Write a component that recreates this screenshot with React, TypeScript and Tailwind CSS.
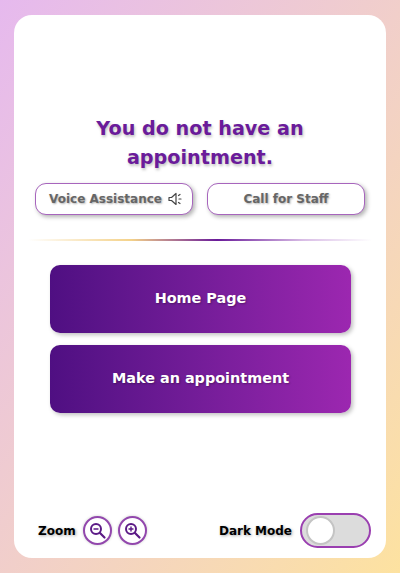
function ZoomButton({ sign }: { sign: "minus" | "plus" }) {
  return (
    <button className="flex h-[29px] w-[29px] items-center justify-center rounded-full border-2 border-[#9247ad] bg-white shadow-[0_0_3px_rgba(0,0,0,0.2)]">
      <svg width="19" height="19" viewBox="0 0 19 19" fill="none" stroke="#5b1a86" strokeWidth="2" strokeLinecap="round">
        <circle cx="8" cy="8" r="5" />
        <path d="M12 12 16.5 16.5" strokeWidth="2.2" />
        <path d="M6 8h4" strokeWidth="1.4" />
        {sign === "plus" && <path d="M8 6v4" strokeWidth="1.4" />}
      </svg>
    </button>
  );
}

function SpeakerIcon() {
  return (
    <svg width="15" height="16" viewBox="0 0 15 16" fill="none" stroke="#444" strokeWidth="1.2" strokeLinecap="round" strokeLinejoin="round">
      <path d="M1 6.5h2.5L8 2.5v11L3.5 9.5H1z" />
      <path d="M10.5 4.5l1.5-1M11 8h2M10.5 11.5l1.5 1" />
    </svg>
  );
}

export default function App() {
  return (
    <main className="min-h-screen bg-gradient-to-br from-[#e6b9ee] to-[#fde2a0] px-[14px] pb-[15px] pt-[15px] font-['DejaVu_Sans',sans-serif]">
      <div className="flex h-[543px] flex-col rounded-[18px] bg-white">
        <h1 className="mt-[99px] px-[40px] text-center text-[19.2px] font-bold leading-[29px] text-[#6a1b9a] [text-shadow:1px_2px_3px_rgba(0,0,0,0.25)]">
          You do not have an appointment.
        </h1>

        <div className="mt-[11px] flex gap-[14px] px-[21px]">
          <button className="flex h-[32px] w-[158px] items-center justify-center gap-[6px] rounded-[11px] border-[1.5px] border-[#a765bd] bg-white pl-[4px] text-[12px] font-bold text-[#666] shadow-[2px_2px_4px_rgba(0,0,0,0.3)] [text-shadow:1px_1px_2px_rgba(0,0,0,0.3)]">
            Voice Assistance
            <SpeakerIcon />
          </button>
          <button className="flex h-[32px] w-[158px] items-center justify-center rounded-[11px] border-[1.5px] border-[#a765bd] bg-white text-[12px] font-bold text-[#666] shadow-[2px_2px_4px_rgba(0,0,0,0.3)] [text-shadow:1px_1px_2px_rgba(0,0,0,0.3)]">
            Call for Staff
          </button>
        </div>

        <div className="mx-[14px] mt-[24px] h-[2px] bg-[linear-gradient(to_right,#ffffff,#f4d28a_30%,#6a1b9a_55%,#d9bde6_80%,#ffffff)]" />

        <div className="mt-[24px] flex flex-col gap-[12px] pl-[36px] pr-[35px]">
          <button className="h-[68px] rounded-[10px] bg-gradient-to-r from-[#4f0f82] to-[#9c27b0] text-[14.4px] font-bold text-white shadow-[2px_2px_4px_rgba(0,0,0,0.25)] [text-shadow:1px_1px_2px_rgba(0,0,0,0.3)]">
            Home Page
          </button>
          <button className="h-[68px] rounded-[10px] bg-gradient-to-r from-[#4f0f82] to-[#9c27b0] text-[14.4px] font-bold text-white shadow-[2px_2px_4px_rgba(0,0,0,0.25)] [text-shadow:1px_1px_2px_rgba(0,0,0,0.3)]">
            Make an appointment
          </button>
        </div>

        <div className="mt-auto flex items-center justify-between pb-[10px] pl-[24px] pr-[15px]">
          <div className="flex items-center gap-[6px]">
            <span className="mr-[1px] text-[12px] font-bold text-black [text-shadow:1px_1px_3px_rgba(0,0,0,0.35)]">Zoom</span>
            <ZoomButton sign="minus" />
            <ZoomButton sign="plus" />
          </div>
          <div className="flex items-center gap-[8px]">
            <span className="text-[12px] font-bold text-black [text-shadow:1px_1px_3px_rgba(0,0,0,0.35)]">Dark Mode</span>
            <div className="flex h-[35px] w-[71px] items-center rounded-full border-2 border-[#9a3fb0] bg-[#dcdcdc] pl-[4px]">
              <div className="h-[29px] w-[29px] rounded-full border-2 border-[#c4c4c4] bg-white" />
            </div>
          </div>
        </div>
      </div>
    </main>
  );
}
